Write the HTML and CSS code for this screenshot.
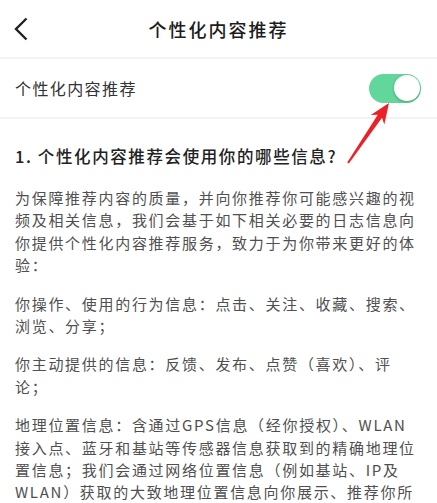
FILE: index.html
```html
<!DOCTYPE html>
<html lang="zh-CN">
<head>
<meta charset="utf-8">
<title>个性化内容推荐</title>
<link rel="stylesheet" href="styles.css">
</head>
<body>
<div class="page">
  <header class="topbar">
    <span class="back">
      <svg width="14" height="24" viewBox="0 0 14 24"><path d="M12.5 1.5 L2 12 L12.5 22.5" fill="none" stroke="#222" stroke-width="2.4"/></svg>
    </span>
    <h1 class="title">个性化内容推荐</h1>
    <span></span>
  </header>
  <div class="setting">
    <span class="setting-label">个性化内容推荐</span>
    <span class="toggle"><span class="knob"></span></span>
  </div>
  <main class="content">
    <h2 class="question">1. 个性化内容推荐会使用你的哪些信息?</h2>
    <p>为保障推荐内容的质量，并向你推荐你可能感兴趣的视频及相关信息，我们会基于如下相关必要的日志信息向你提供个性化内容推荐服务，致力于为你带来更好的体验：</p>
    <p>你操作、使用的行为信息：点击、关注、收藏、搜索、浏览、分享；</p>
    <p>你主动提供的信息：反馈、发布、点赞（喜欢）、评论；</p>
    <p>地理位置信息：含通过GPS信息（经你授权）、WLAN接入点、蓝牙和基站等传感器信息获取到的精确地理位置信息；我们会通过网络位置信息（例如基站、IP及WLAN）获取的大致地理位置信息向你展示、推荐你所</p>
  </main>
  <svg class="arrow" width="437" height="503" viewBox="0 0 437 503">
    <polygon points="389,103 384.3,124.5 382,117.8 348.8,163.6 347.2,162.4 377.8,114.8 370.8,115" fill="#ee1f26"/>
  </svg>
</div>
</body>
</html>
```

FILE: styles.css
```css
html, body {
  margin: 0;
  padding: 0;
  background: #ffffff;
}
body {
  font-family: "Noto Sans CJK SC", "Noto Sans", sans-serif;
  color: #333;
}
.page {
  position: relative;
  width: 437px;
  height: 503px;
  overflow: hidden;
}
.topbar {
  display: grid;
  grid-template-columns: 1fr auto 1fr;
  align-items: center;
  height: 57px;
  border-bottom: 2px solid #f3f3f3;
}
.back {
  display: flex;
  align-items: center;
  height: 24px;
  padding-left: 14px;
}
.title {
  margin: 0;
  font-size: 18px;
  font-weight: 500;
  letter-spacing: 2px;
  color: #1c1c1c;
  line-height: 24px;
}
.setting {
  display: flex;
  align-items: center;
  justify-content: space-between;
  height: 58px;
  padding: 0 16px 0 15px;
  border-bottom: 2px solid #f3f3f3;
}
.setting-label {
  font-size: 16px;
  letter-spacing: 1.4px;
  color: #333;
}
.toggle {
  display: flex;
  justify-content: flex-end;
  align-items: center;
  width: 52px;
  height: 29px;
  padding: 0 1.5px;
  box-sizing: border-box;
  border-radius: 15px;
  background: #62d69b;
}
.knob {
  width: 26px;
  height: 26px;
  border-radius: 50%;
  background: #ffffff;
  box-shadow: 0 1px 3px rgba(0, 0, 0, 0.25);
}
.content {
  padding: 25px 15px 0 15px;
}
.question {
  margin: 0 0 19px 0;
  font-size: 16.5px;
  font-weight: 500;
  letter-spacing: 1.6px;
  line-height: 24px;
  color: #222;
}
.content p {
  margin: 0 0 16px 0;
  font-size: 15px;
  letter-spacing: 1.7px;
  line-height: 22.4px;
  color: #505050;
}
.arrow {
  position: absolute;
  top: 0;
  left: 0;
  pointer-events: none;
}
```
